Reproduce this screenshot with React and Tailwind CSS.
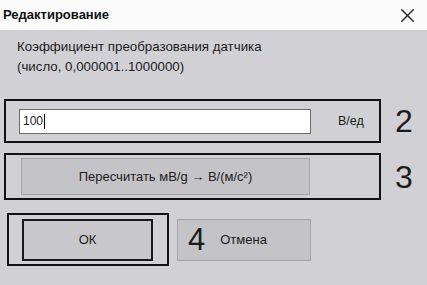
import { X } from 'lucide-react';

const App = () => {
  return (
    <div className="w-[427px] h-[285px] overflow-hidden bg-[#d1d1d5] text-[#1c1c1c] font-['Liberation_Sans',Arial,sans-serif] text-[13px]">
      {/* title bar */}
      <div className="h-[30px] bg-[#fbfbfb] flex items-center justify-between pl-[3px] pr-[8px]">
        <span className="text-[13px] font-semibold text-[#111]">Редактирование</span>
        <X className="w-[23px] h-[23px] text-[#222]" strokeWidth={1.4} />
      </div>

      {/* description */}
      <div className="mt-[7px] pl-[17px] leading-[20px] text-[13.3px]">
        <div>Коэффициент преобразования датчика</div>
        <div>(число, 0,000001..1000000)</div>
      </div>

      {/* row 2: value */}
      <div className="mt-[22px] flex items-center">
        <div className="ml-[4px] w-[377px] h-[44px] border-2 border-[#111] flex items-center pl-[13px]">
          <div className="w-[292px] h-[25px] bg-white border border-[#6b6b6b] flex items-center pl-[3px] text-[12px]">
            <span>100</span>
            <span className="w-px h-[15px] bg-black ml-px" />
          </div>
          <span className="ml-[27px] text-[12.5px]">В/ед</span>
        </div>
        <span className="ml-[14px] text-[32px] leading-none font-light">2</span>
      </div>

      {/* row 3: recalc */}
      <div className="mt-[10px] flex items-center">
        <div className="ml-[4px] w-[377px] h-[47px] border-2 border-[#111] flex items-center pl-[15px]">
          <button className="w-[289px] h-[37px] bg-[#c4c4c8] border border-[#a4a4a8] text-[13px] flex items-center justify-center">
            Пересчитать мВ/g → В/(м/с²)
          </button>
        </div>
        <span className="ml-[14px] text-[32px] leading-none font-light">3</span>
      </div>

      {/* row 4: buttons */}
      <div className="mt-[13px] flex items-center">
        <div className="ml-[7px] w-[162px] h-[53px] border-2 border-[#111] flex items-center pl-[13px]">
          <button className="w-[131px] h-[42px] bg-[#c8c8cc] border-2 border-[#1a1a1a] text-[13px] flex items-center justify-center">
            ОК
          </button>
        </div>
        <button className="ml-[8px] w-[134px] h-[42px] bg-[#c4c4c8] border border-[#a4a4a8] flex items-center pl-[10px]">
          <span className="text-[31px] leading-none font-light">4</span>
          <span className="ml-[15px] text-[13px]">Отмена</span>
        </button>
      </div>
    </div>
  );
};

export default App;
